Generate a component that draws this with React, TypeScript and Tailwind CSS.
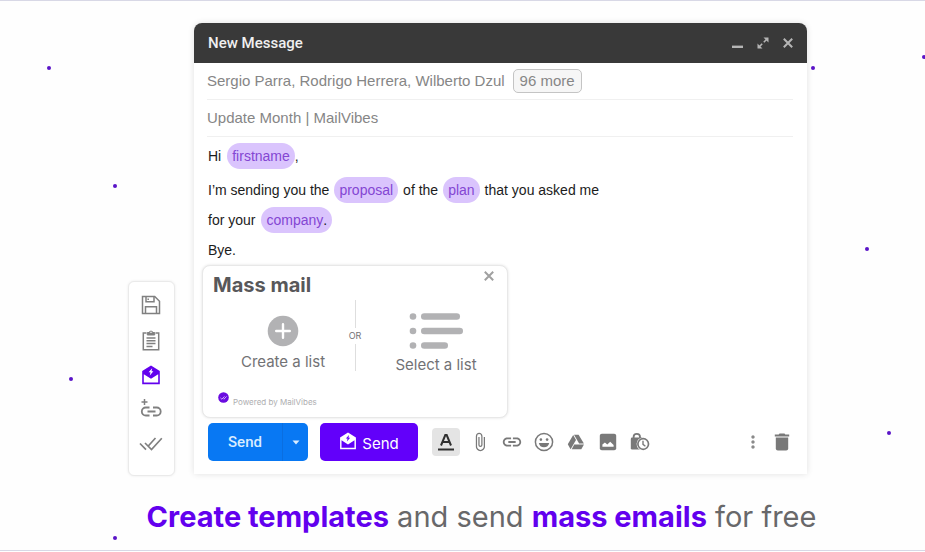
import type { ReactNode } from "react";
import { MdAttachFile, MdInsertLink, MdMoreVert } from "react-icons/md";

const dots = [
  "left-[47px] top-[66px]",
  "left-[113px] top-[184px]",
  "left-[69px] top-[377px]",
  "left-[113px] top-[536px]",
  "left-[811px] top-[66px]",
  "left-[865px] top-[247px]",
  "left-[887px] top-[431px]",
  "left-[922px] top-[55px]",
];

function SaveIcon() {
  return (
    <svg width="20" height="20" viewBox="0 0 20 20" fill="none" stroke="currentColor" strokeWidth="1.5">
      <path d="M1.5 1.5h12.2l4.8 4.8v12.2h-17z" />
      <path d="M5 1.5v5.2h8V1.5M7.2 3.5v1.6M4.5 18.5v-6.7h11v6.7" />
    </svg>
  );
}

function TemplateIcon() {
  return (
    <svg width="20" height="22" viewBox="0 0 20 22" fill="none" stroke="currentColor" strokeWidth="1.5">
      <path d="M5.5 4H2.3v16.8h15.4V4h-3.2" />
      <path d="M6.3 6V3.5h1.8a2 2 0 0 1 3.8 0h1.8V6z" fill="currentColor" strokeWidth="1" />
      <circle cx="10" cy="3.2" r=".8" fill="white" stroke="none" />
      <path d="M5.5 9h9M5.5 11.8h9M5.5 14.6h9M5.5 17.4h6" />
    </svg>
  );
}

function MassMailIcon({ size, bolt }: { size: number; bolt: string }) {
  return (
    <svg width={size} height={size} viewBox="0 0 20 20" fill="currentColor">
      <path fillRule="evenodd" d="M10 .5 18.8 6v13.2H1.2V6zM2.8 9.2v8.4h14.4V9.2L10 13.8z" />
      <path d="m11.2 3.2-3.6 4h1.9l-.7 3.4 3.6-4.3h-1.9z" fill={bolt} />
    </svg>
  );
}

function AddLinkIcon() {
  return (
    <svg width="22" height="22" viewBox="0 0 22 22" fill="none" stroke="currentColor">
      <path d="M4.5 0v6M1.5 3h6" strokeWidth="1.5" />
      <path d="M9.5 8.5H5.8a4 4 0 0 0 0 8h3.7M13 8.5h3.7a4 4 0 0 1 0 8H13M7.5 12.5h8" strokeWidth="1.8" />
    </svg>
  );
}

function DoubleCheckIcon() {
  return (
    <svg width="24" height="18" viewBox="0 0 24 18" fill="none" stroke="currentColor" strokeWidth="1.7">
      <path d="m1 7.5 6 6.2M6 7l6.5 6.5L22.8 2.2M9.5 9.8l7-7.8" />
    </svg>
  );
}

function SmileIcon() {
  return (
    <svg width="20" height="20" viewBox="0 0 20 20" fill="currentColor">
      <circle cx="10" cy="10" r="8.6" fill="none" stroke="currentColor" strokeWidth="1.5" />
      <circle cx="6.9" cy="7.6" r="1.3" />
      <circle cx="13.1" cy="7.6" r="1.3" />
      <path d="M4.8 11h10.4a5.3 5.3 0 0 1-10.4 0z" />
    </svg>
  );
}

function DriveIcon() {
  return (
    <svg width="18" height="16" viewBox="0 0 18 16" fill="currentColor">
      <path d="M6.2 1 9 6 3.6 15.2.8 10.3z" />
      <path d="M7 .8h4.6l5.3 8.8h-4.8z" />
      <path d="M7.2 10.5H17l-2.7 4.8H4.7z" />
    </svg>
  );
}

function PhotoIcon() {
  return (
    <svg width="18" height="18" viewBox="0 0 18 18">
      <rect x=".8" y=".8" width="16.4" height="16.4" rx="2" fill="currentColor" />
      <path d="M3.4 13.8v-2.2l2.5-2.1 2.4 2 2.9-2.7 3.4 3.2v1.8z" fill="white" />
    </svg>
  );
}

function ConfidentialIcon() {
  return (
    <svg width="20" height="20" viewBox="0 0 20 20">
      <path d="M3.6 7V5a3.2 3.2 0 0 1 6.4 0v2" fill="none" stroke="currentColor" strokeWidth="1.8" />
      <rect x=".8" y="5.6" width="12" height="12" rx="1.4" fill="currentColor" />
      <circle cx="13.2" cy="12" r="6.6" fill="white" />
      <circle cx="13.2" cy="12" r="5.3" fill="white" stroke="currentColor" strokeWidth="1.7" />
      <path d="M13 8.8v3.6l2.4 1.8" fill="none" stroke="currentColor" strokeWidth="1.4" />
    </svg>
  );
}

function TrashIcon() {
  return (
    <svg width="16" height="18" viewBox="0 0 16 18" fill="currentColor">
      <path d="M5.5.6h5l.8 1h3.9v1.8H.8V1.6h3.9z" />
      <path d="M1.8 4.6h12.4v10.8a2 2 0 0 1-2 2H3.8a2 2 0 0 1-2-2z" />
    </svg>
  );
}

function CloseIcon() {
  return (
    <svg width="10" height="10" viewBox="0 0 10 10" stroke="currentColor" strokeWidth="2">
      <path d="m.8.8 8.4 8.4M9.2.8.8 9.2" />
    </svg>
  );
}

function IconButton({ label, children }: { label: string; children: ReactNode }) {
  return (
    <button type="button" aria-label={label} className="flex h-5 w-6 items-center justify-center">
      {children}
    </button>
  );
}

function Tag({ children }: { children: ReactNode }) {
  return (
    <span className="flex h-[26px] items-center rounded-full bg-[#dac4fd] px-[5px] text-[#8446d3]">
      {children}
    </span>
  );
}

function Sidebar() {
  return (
    <aside className="-mb-0.5 flex w-[47px] shrink-0 flex-col items-center gap-[15px] rounded-md border border-[#eaeaea] bg-white pt-[13px] pr-px pb-5 text-[#808080] shadow-[0_0_3px_rgba(0,0,0,0.08)]">
      <IconButton label="Save template"><SaveIcon /></IconButton>
      <IconButton label="Templates"><TemplateIcon /></IconButton>
      <button type="button" aria-label="Mass mail" className="flex h-5 w-6 items-center justify-center text-[#6200ee]">
        <MassMailIcon size={20} bolt="white" />
      </button>
      <IconButton label="Add link"><AddLinkIcon /></IconButton>
      <IconButton label="Tracking"><DoubleCheckIcon /></IconButton>
    </aside>
  );
}

function MassMailCard() {
  return (
    <section className="ml-2 flex h-[153px] w-[306px] flex-col rounded-lg border border-[#e8e8e8] bg-white font-['Inter',sans-serif] text-[#727275] shadow-[0_0_3px_rgba(0,0,0,0.12)]">
      <div className="flex items-start justify-between pt-[5px] pr-[13px] pl-2.5">
        <h2 className="text-xl leading-7 font-bold text-[#58585a]">Mass mail</h2>
        <button type="button" aria-label="Close mass mail" className="text-[#a0a0a0]">
          <CloseIcon />
        </button>
      </div>
      <div className="flex h-[72px] justify-center">
        <button type="button" className="flex w-[144px] flex-col items-center justify-start pt-4 pl-4 text-[15px] leading-5">
          <svg width="32" height="32" viewBox="0 0 32 32" className="shrink-0">
            <circle cx="16" cy="16" r="15.3" fill="#b2b2b4" />
            <path d="M16 9.2v13.6M9.2 16h13.6" stroke="white" strokeWidth="2.4" strokeLinecap="round" />
          </svg>
          <span className="mt-[5px] whitespace-nowrap">Create a list</span>
        </button>
        <div className="flex w-4 flex-col items-center gap-0.5 pt-px text-[9px] leading-3">
          <span className="w-px flex-1 bg-[#dedede]" />
          OR
          <span className="w-px flex-1 bg-[#dedede]" />
        </div>
        <button type="button" className="flex w-[144px] flex-col items-center justify-start pt-[13px] pl-0.5 text-[15px] leading-5">
          <svg width="54" height="38" viewBox="0 0 54 38" fill="#b2b2b4" className="shrink-0">
            <circle cx="4" cy="4.5" r="3.3" />
            <circle cx="4" cy="19" r="3.3" />
            <circle cx="4" cy="33.5" r="3.3" />
            <rect x="12" y="1.2" width="39" height="6.6" rx="3.3" />
            <rect x="12" y="15.7" width="42" height="6.6" rx="3.3" />
            <rect x="12" y="30.2" width="27" height="6.6" rx="3.3" />
          </svg>
          <span className="mt-[5px] whitespace-nowrap">Select a list</span>
        </button>
      </div>
      <div className="mt-auto flex items-center gap-1 pb-[9px] pl-[15px] text-[8px] leading-3 text-[#aeaeb0]">
        <svg width="11" height="16" viewBox="0 0 11 16">
          <circle cx="5.5" cy="5.5" r="5.3" fill="#6a0be0" />
          <path d="m2.4 5.8 1.5 1.4 2.6-2.8M5.3 6.6l.6.6 2.7-2.8" fill="none" stroke="#d9b8ff" strokeWidth=".9" />
        </svg>
        <span className="pt-1">Powered by MailVibes</span>
      </div>
    </section>
  );
}

function ComposeWindow() {
  return (
    <main className="min-w-0 flex-1 rounded-t-lg bg-white pb-[13px] shadow-[0_0_6px_rgba(0,0,0,0.12)]">
      <header className="flex h-10 items-center justify-between rounded-t-lg bg-[#393939] px-3.5 text-[#b5b5b5]">
        <h1 className="font-['Roboto',sans-serif] text-[15px] font-medium text-[#f0f0f0]">New Message</h1>
        <div className="flex items-center gap-3.5">
          <button type="button" aria-label="Minimize">
            <svg width="11" height="11" viewBox="0 0 11 11" stroke="currentColor" strokeWidth="2.4">
              <path d="M0 8.8h11" />
            </svg>
          </button>
          <button type="button" aria-label="Expand">
            <svg width="12" height="12" viewBox="0 0 12 12" fill="currentColor">
              <path d="M6.5.5h5v5zM.5 6.5v5h5z" />
              <path d="m2 10 3.2-3.2M6.8 5.2 10 2" stroke="currentColor" strokeWidth="1.6" />
            </svg>
          </button>
          <button type="button" aria-label="Close">
            <CloseIcon />
          </button>
        </div>
      </header>

      <div className="mr-3.5 ml-[13px] font-['Liberation_Sans',Arial,sans-serif] text-[15px] text-[#868686]">
        <div className="flex h-[37px] items-center gap-2 border-b border-[#f0f0f0] whitespace-nowrap">
          <span>Sergio Parra, Rodrigo Herrera, Wilberto Dzul</span>
          <button type="button" className="h-6 rounded-[5px] border border-[#c4c4c4] bg-[#f6f6f6] px-1.5 leading-5">
            96 more
          </button>
        </div>
        <input
          aria-label="Subject"
          defaultValue="Update Month | MailVibes"
          className="block h-[37px] w-full border-b border-[#f0f0f0] pb-0.5 outline-none"
        />
      </div>

      <div className="px-3.5 pt-1.5 font-['Liberation_Sans',Arial,sans-serif] text-sm whitespace-nowrap text-[#1c1c1c]">
        <p className="mb-2 flex h-[26px] items-center">
          Hi <span className="ml-1.5"><Tag>firstname</Tag></span>,
        </p>
        <p className="mb-1 flex h-[26px] items-center gap-[5px]">
          I’m sending you the <Tag>proposal</Tag> of the <Tag>plan</Tag> that you asked me
        </p>
        <p className="mb-1 flex h-[26px] items-center gap-1.5">
          for your
          <Tag>
            company<span className="text-[#1c1c1c]">.</span>
          </Tag>
        </p>
        <p className="mb-0.5 flex h-[26px] items-center">Bye.</p>
      </div>

      <MassMailCard />

      <footer className="mt-[5px] flex items-center pr-[13px] pl-3.5 font-['Inter',sans-serif] text-[15px] text-[#797979]">
        <div className="flex h-[38px] w-[100px] shrink-0 overflow-hidden rounded-[5px] bg-[#0878f3] text-[#d9ecff]">
          <button type="button" className="flex-1 font-['Roboto',sans-serif] font-medium">Send</button>
          <button type="button" aria-label="Send options" className="flex w-[26px] items-center justify-center border-l border-[#0a6ee0]">
            <svg width="8" height="5" viewBox="0 0 8 5" fill="currentColor"><path d="M.5.5h7L4 4.5z" /></svg>
          </button>
        </div>
        <button type="button" className="ml-3 flex h-[38px] w-[98px] shrink-0 items-center justify-center gap-[5px] rounded-[5px] bg-[#6200fa] text-white">
          <span className="pb-0.5"><MassMailIcon size={18} bolt="#6200fa" /></span>
          <span className="pt-1">Send</span>
        </button>
        <div className="ml-3.5 flex items-center gap-2">
          <button type="button" aria-label="Formatting options" className="flex h-7 w-7 items-center justify-center rounded bg-[#e4e4e4] text-[#303030]">
            <svg width="18" height="20" viewBox="0 0 18 20" fill="none" stroke="currentColor">
              <path d="M4 13.5 8.3 3h1.4L14 13.5M5.6 10h6.8" strokeWidth="2" />
              <path d="M1 17.5h16" strokeWidth="2" />
            </svg>
          </button>
          <IconButton label="Attach files"><MdAttachFile size={20} /></IconButton>
          <IconButton label="Insert link"><MdInsertLink size={22} /></IconButton>
          <IconButton label="Insert emoji"><SmileIcon /></IconButton>
          <IconButton label="Insert from Drive"><DriveIcon /></IconButton>
          <IconButton label="Insert photo"><PhotoIcon /></IconButton>
          <IconButton label="Confidential mode"><ConfidentialIcon /></IconButton>
        </div>
        <div className="ml-auto flex items-center gap-[5px]">
          <IconButton label="More options"><MdMoreVert size={20} color="#8a8a8a" /></IconButton>
          <IconButton label="Discard draft"><TrashIcon /></IconButton>
        </div>
      </footer>
    </main>
  );
}

export default function App() {
  return (
    <div className="relative overflow-hidden bg-[#fefefe]">
      <div className="border-y border-[#d8d8e6] pt-[22px] pb-3.5">
        <div className="flex items-end gap-[19px] pr-[118px] pl-32">
          <Sidebar />
          <ComposeWindow />
        </div>
        <p className="mt-6 pl-[38px] text-center font-['Inter',sans-serif] text-[29px] leading-[38px] whitespace-nowrap text-[#68686a]">
          <strong className="font-bold text-[#6200ee]">Create templates</strong> and send{" "}
          <strong className="font-bold text-[#6200ee]">mass emails</strong> for free
        </p>
      </div>
      {dots.map((place) => (
        <span key={place} className={`absolute size-1 rounded-full bg-[#5a14c8] ${place}`} />
      ))}
    </div>
  );
}
